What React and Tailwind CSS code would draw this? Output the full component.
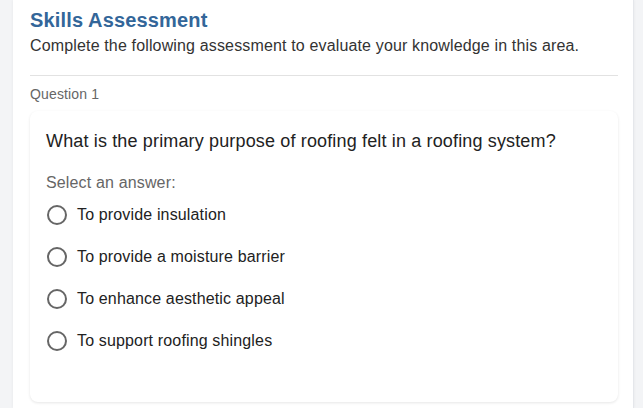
import React, { useState } from 'react';

const options = [
    'To provide insulation',
    'To provide a moisture barrier',
    'To enhance aesthetic appeal',
    'To support roofing shingles',
];

const App = () => {
    const [selected, setSelected] = useState(null);

    return (
        <div className="min-h-screen bg-[#f3f4f6] font-['Liberation_Sans',Arial,sans-serif] tracking-[0.15px]">
            <div className="ml-[13px] w-[621px] min-h-[408px] bg-white border-r border-[#e5e7eb] shadow-[0_0_3px_rgba(0,0,0,0.06)] pl-[17px] pr-[15px] pt-[6px]">
                <div className="border-b border-[#e2e2e2] pb-[17px]">
                    <h1 className="text-[20px] leading-[28px] font-bold text-[#336699]">Skills Assessment</h1>
                    <p className="text-[16px] leading-[24px] text-[#333]">Complete the following assessment to evaluate your knowledge in this area.</p>
                </div>
                <div className="pt-[8px] text-[14px] leading-[20px] text-[#666]">Question 1</div>
                <div className="mt-[7px] rounded-lg bg-white shadow-[0_1px_3px_rgba(0,0,0,0.1)] px-4 pt-4 pb-[49px]">
                    <h2 className="text-[18px] leading-[28px] text-[#222] mb-4">What is the primary purpose of roofing felt in a roofing system?</h2>
                    <div className="text-[16px] leading-[24px] text-[#666] mb-2">Select an answer:</div>
                    <div className="flex flex-col gap-[18px]">
                        {options.map((opt, i) => (
                            <label key={i} className="flex items-center gap-[10px] cursor-pointer text-[16px] leading-[24px] text-[#222]" onClick={() => setSelected(i)}>
                                <span className="w-5 h-5 rounded-full border-2 border-[#666] flex items-center justify-center shrink-0 ml-px">
                                    {selected === i && <span className="w-2.5 h-2.5 rounded-full bg-[#336699]" />}
                                </span>
                                <span>{opt}</span>
                            </label>
                        ))}
                    </div>
                </div>
            </div>
        </div>
    );
};

export default App;
